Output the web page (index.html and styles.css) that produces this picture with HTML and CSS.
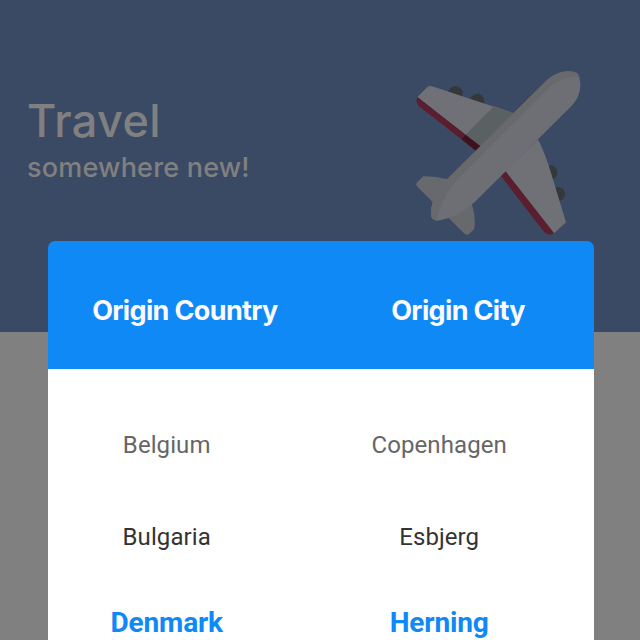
FILE: index.html
```
<!DOCTYPE html>
<html lang="en">
<head>
<meta charset="utf-8">
<title>Travel</title>
<link rel="stylesheet" href="styles.css">
</head>
<body>
<main class="screen">
  <header class="hero">
    <div class="hero-text">
      <h1 class="title">Travel</h1>
      <p class="subtitle">somewhere new!</p>
    </div>
    <svg class="plane" viewBox="0 0 600 570" aria-hidden="true">
      <g fill="#35383a">
        <circle cx="166" cy="100" r="22"/>
        <circle cx="232" cy="122" r="21"/>
        <circle cx="450" cy="338" r="22"/>
        <circle cx="474" cy="402" r="21"/>
      </g>
      <path fill="#68696c" d="M142 358Q105 348 70 349L50 368Q47 374 51 379L104 432L145 473L192 520Q200 528 208 521L223 506Q228 465 214 430Z"/>
      <path fill="#707176" d="M52 111L83 80Q89 76 96 79L340 159L240 258Z"/>
      <path fill="#5b6062" d="M282 138L340 159L240 258L197 224Z"/>
      <path fill="#5a1e2e" d="M52 111L197 224L184 238L57 139Q46 127 52 111Z"/>
      <path fill="#3f111d" d="M197 224L241 258L227 272L184 238Z"/>
      <path fill="#707176" d="M414 238Q430 270 446 316L498 487L462 520L316 333Z"/>
      <path fill="#5a1e2e" d="M316 333L462 520Q446 529 433 517L302 347Z"/>
      <path fill="#6e6f74" d="M433 68C466 33 509 27 532 40C545 60 547 105 515 137L225 425C195 449 175 465 145 474L114 482Q97 482 93 467C92 421 111 392 142 357Z"/>
      <path fill="#68696c" d="M433 68C466 33 509 27 532 40Q538 48 539 54C512 48 478 56 446 83L180 350C150 380 125 420 109 482Q97 479 93 467C92 421 111 392 142 357Z"/>
    </svg>
  </header>
  <section class="picker">
    <div class="picker-head">
      <h2>Origin Country</h2>
      <h2>Origin City</h2>
    </div>
    <div class="picker-body">
      <ul class="wheel">
        <li class="far">Belgium</li>
        <li>Bulgaria</li>
        <li class="selected">Denmark</li>
      </ul>
      <ul class="wheel">
        <li class="far">Copenhagen</li>
        <li>Esbjerg</li>
        <li class="selected">Herning</li>
      </ul>
    </div>
  </section>
</main>
</body>
</html>
```
FILE: styles.css
```
* { box-sizing: border-box; margin: 0; padding: 0; }
body { width: 640px; height: 640px; overflow: hidden; }
.screen { position: relative; height: 640px; background: #808080; overflow: hidden; }
.hero {
  display: flex;
  justify-content: space-between;
  height: 332px;
  padding: 60px 40px 0 27px;
  background: #3b4a64;
  color: #808080;
  font-family: Inter, sans-serif;
}
.hero-text { padding-top: 34px; }
.title { font-size: 45px; line-height: 54px; font-weight: 500; letter-spacing: 0.4px; }
.subtitle { margin-top: 4px; font-size: 27px; line-height: 32px; font-weight: 500; letter-spacing: 0.2px; }
.plane { width: 200px; height: 190px; flex: none; }
.picker {
  position: absolute;
  top: 241px;
  left: 47.7px;
  width: 546.3px;
  height: 420px;
}
.picker-head {
  display: grid;
  grid-template-columns: 274.5px 1fr;
  height: 128.3px;
  padding-top: 53px;
  border-radius: 7px 7px 0 0;
  background: #0f89f5;
  color: #fdfaff;
  text-align: center;
  font-family: Inter, sans-serif;
}
.picker-head h2 { font-size: 27px; line-height: 34px; font-weight: 700; letter-spacing: -0.65px; }
.picker-body {
  display: grid;
  grid-template-columns: 238px 307px;
  height: 292px;
  padding-top: 30px;
  background: #fff;
  font-family: Roboto, sans-serif;
  text-align: center;
}
.wheel { list-style: none; color: #333; font-size: 24px; line-height: 92px; letter-spacing: 0.08px; }
.wheel li { height: 92px; }
.wheel .far { color: #666; }
.wheel .selected { color: #0f89f5; font-size: 28px; font-weight: 700; line-height: 80px; letter-spacing: -0.15px; }
```
